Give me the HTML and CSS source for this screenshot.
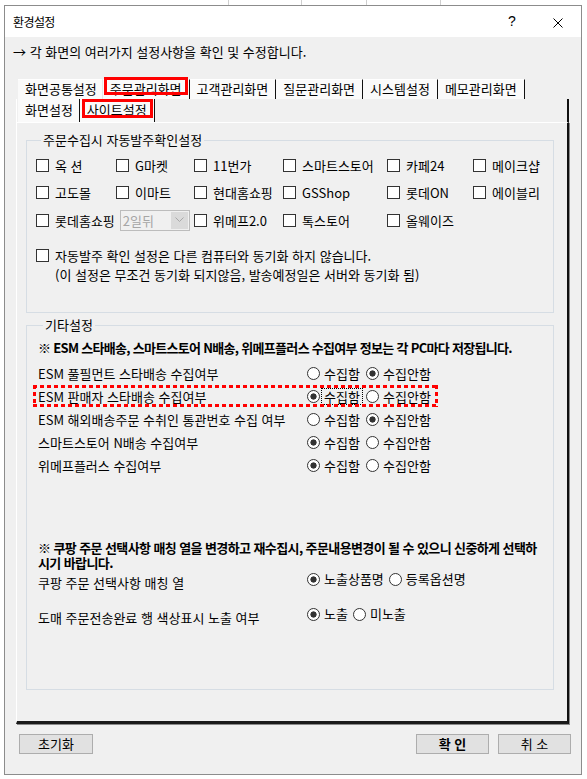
FILE: index.html
```html
<!DOCTYPE html>
<html lang="ko">
<head>
  <meta charset="UTF-8">
  <meta name="viewport" content="width=device-width, initial-scale=1.0">
  <title>환경설정</title>
  <link rel="stylesheet" href="styles.css">
</head>
<body>
  <div class="window">
    <div class="titlebar">
      <span class="title">환경설정</span>
      <span class="tb-btn help">?</span>
      <span class="tb-btn close">
        <svg width="10" height="10" viewBox="0 0 10 10"><path d="M0.5 0.5L9.5 9.5M9.5 0.5L0.5 9.5" stroke="#000" stroke-width="1"/></svg>
      </span>
    </div>

    <p class="desc">→ 각 화면의 여러가지 설정사항을 확인 및 수정합니다.</p>

    <div class="tabs tabs-back">
      <span class="tab first">화면공통설정</span>
      <span class="tab mark">주문관리화면</span>
      <span class="tab">고객관리화면</span>
      <span class="tab">질문관리화면</span>
      <span class="tab">시스템설정</span>
      <span class="tab">메모관리화면</span>
    </div>
    <div class="tabs tabs-front">
      <span class="tab">화면설정</span>
      <span class="tab mark">사이트설정</span>
    </div>

    <div class="panel">
      <fieldset class="group group-site">
        <legend>주문수집시 자동발주확인설정</legend>
        <div class="site-grid">
          <div class="chk"><span class="cb"></span>옥 션</div>
          <div class="chk"><span class="cb"></span>G마켓</div>
          <div class="chk"><span class="cb"></span>11번가</div>
          <div class="chk"><span class="cb"></span>스마트스토어</div>
          <div class="chk"><span class="cb"></span>카페24</div>
          <div class="chk"><span class="cb"></span>메이크샵</div>

          <div class="chk"><span class="cb"></span>고도몰</div>
          <div class="chk"><span class="cb"></span>이마트</div>
          <div class="chk"><span class="cb"></span>현대홈쇼핑</div>
          <div class="chk"><span class="cb"></span>GSShop</div>
          <div class="chk"><span class="cb"></span>롯데ON</div>
          <div class="chk"><span class="cb"></span>에이블리</div>

          <div class="chk span2"><span class="cb"></span>롯데홈쇼핑
            <span class="combo"><span class="combo-text">2일뒤</span><span class="combo-btn"><svg width="9" height="6" viewBox="0 0 9 6"><path d="M0.5 0.5L4.5 4.5L8.5 0.5" fill="none" stroke="#a8a8a8" stroke-width="1"/></svg></span></span>
          </div>
          <div class="chk"><span class="cb"></span>위메프2.0</div>
          <div class="chk"><span class="cb"></span>톡스토어</div>
          <div class="chk"><span class="cb"></span>올웨이즈</div>
        </div>
        <div class="chk sync">
          <span class="cb"></span>
          <div>자동발주 확인 설정은 다른 컴퓨터와 동기화 하지 않습니다.<br>(이 설정은 무조건 동기화 되지않음, 발송예정일은 서버와 동기화 됨)</div>
        </div>
      </fieldset>

      <fieldset class="group group-etc">
        <legend>기타설정</legend>
        <p class="note">※ ESM 스타배송, 스마트스토어 N배송, 위메프플러스 수집여부 정보는 각 PC마다 저장됩니다.</p>

        <div class="opt">
          <span class="opt-label">ESM 풀필먼트 스타배송 수집여부</span>
          <span class="radio fixed"><span class="rb"></span>수집함</span>
          <span class="radio"><span class="rb on"></span>수집안함</span>
        </div>
        <div class="opt marked">
          <span class="opt-label">ESM 판매자 스타배송 수집여부</span>
          <span class="radio fixed"><span class="rb on"></span><span class="focus">수집함</span></span>
          <span class="radio"><span class="rb"></span>수집안함</span>
        </div>
        <div class="opt">
          <span class="opt-label">ESM 해외배송주문 수취인 통관번호 수집 여부</span>
          <span class="radio fixed"><span class="rb"></span>수집함</span>
          <span class="radio"><span class="rb on"></span>수집안함</span>
        </div>
        <div class="opt">
          <span class="opt-label">스마트스토어 N배송 수집여부</span>
          <span class="radio fixed"><span class="rb on"></span>수집함</span>
          <span class="radio"><span class="rb"></span>수집안함</span>
        </div>
        <div class="opt">
          <span class="opt-label">위메프플러스 수집여부</span>
          <span class="radio fixed"><span class="rb on"></span>수집함</span>
          <span class="radio"><span class="rb"></span>수집안함</span>
        </div>

        <p class="note note-coupang">※ 쿠팡 주문 선택사항 매칭 열을 변경하고 재수집시, 주문내용변경이 될 수 있으니 신중하게 선택하<br>시기 바랍니다.</p>

        <div class="opt opt-tall">
          <span class="opt-label">쿠팡 주문 선택사항 매칭 열</span>
          <span class="radio"><span class="rb on"></span>노출상품명</span>
          <span class="radio"><span class="rb"></span>등록옵션명</span>
        </div>
        <div class="opt opt-tall">
          <span class="opt-label">도매 주문전송완료 행 색상표시 노출 여부</span>
          <span class="radio"><span class="rb on"></span>노출</span>
          <span class="radio"><span class="rb"></span>미노출</span>
        </div>
      </fieldset>
    </div>

    <div class="buttons">
      <button class="btn">초기화</button>
      <button class="btn ok">확 인</button>
      <button class="btn cancel">취 소</button>
    </div>
  </div>
</body>
</html>
```

FILE: styles.css
```css
body {
  margin: 0;
  padding: 5px 0 0 4px;
  font-family: "Noto Sans CJK KR", "Noto Sans", sans-serif;
  font-size: 13px;
  color: #000;
  background:
    linear-gradient(#cfcfcf, #cfcfcf) 228px 0 / 1px 5px no-repeat,
    linear-gradient(#cfcfcf, #cfcfcf) 301px 0 / 1px 5px no-repeat,
    linear-gradient(#cfcfcf, #cfcfcf) 366px 0 / 1px 5px no-repeat,
    linear-gradient(#cfcfcf, #cfcfcf) 440px 0 / 1px 5px no-repeat,
    #fff;
}
.window {
  box-sizing: border-box;
  width: 578px;
  height: 770px;
  border: 1px solid #8c8c8c;
  background: #f0f0f0;
}
.titlebar {
  display: flex;
  height: 31px;
  line-height: 31px;
  background: #fff;
}
.title {
  padding-left: 8px;
  font-size: 12px;
  letter-spacing: -0.6px;
}
.tb-btn {
  width: 46px;
  text-align: center;
}
.help {
  margin-left: auto;
  font-family: "Liberation Sans", sans-serif;
  font-size: 14px;
}
.close svg {
  vertical-align: -1px;
}
.desc {
  margin: 7px 0 0 8px;
  line-height: 16px;
}

/* tabs */
.tabs {
  display: flex;
}
.tabs-back {
  margin-top: 19px;
  padding-left: 13px;
  height: 20px;
}
.tabs-front {
  box-sizing: border-box;
  margin-left: 11px;
  width: 553px;
  height: 23px;
  padding-left: 1px;
  border-left: 1px solid #fff;
  border-right: 2px solid #111;
}
.tab {
  position: relative;
  padding: 0 7px;
  line-height: 18px;
  background: #fafafa;
  border-right: 1px solid #111;
}
.tabs-back .tab {
  border-top: 1px solid #fff;
}
.tabs-back .tab.first {
  padding-right: 5px;
  border-right-color: #e6e6e6;
}
.tabs-front .tab {
  line-height: 21px;
}
.tabs-front .tab:first-child {
  padding-right: 6px;
}
.tab.mark::after {
  content: "";
  position: absolute;
  left: 1px;
  right: 1px;
  top: -3px;
  height: 18px;
  box-sizing: border-box;
  border: 3px solid #f00;
}
.tabs-front .tab.mark::after {
  left: 2px;
  top: 0;
  height: 19px;
}

/* panel */
.panel {
  box-sizing: border-box;
  margin-left: 11px;
  width: 553px;
  height: 602px;
  padding-left: 9px;
  border-left: 1px solid #fff;
  border-top: 1px solid #fff;
  border-right: 2px solid #111;
  border-bottom: 3px solid #1a1a1a;
  box-shadow: 1px 1px 0 #8a8a8a;
}
.group {
  box-sizing: border-box;
  width: 528px;
  margin: 0;
  padding: 0;
  border: 1px solid #d6dde4;
  min-inline-size: 0;
}
.group legend {
  margin-left: 5px;
  padding: 0 2px;
  line-height: 16px;
}
.group-site {
  margin-top: 9px;
  height: 181px;
  padding-left: 9px;
}
.group-etc {
  margin-top: 4px;
  height: 373px;
  padding-left: 11px;
}
.site-grid {
  display: grid;
  grid-template-columns: 80px 78px 89px 104px 86px 60px;
  grid-auto-rows: 20px;
  row-gap: 7.5px;
  margin-top: 7px;
}
.chk {
  display: flex;
  align-items: center;
  gap: 6px;
  white-space: nowrap;
}
.span2 {
  grid-column: span 2;
}
.cb {
  flex: none;
  box-sizing: border-box;
  width: 13px;
  height: 13px;
  border: 1px solid #333;
  background: #fff;
}
.combo {
  display: flex;
  box-sizing: border-box;
  width: 70px;
  height: 21px;
  margin-left: -1px;
  border: 1px solid #bcbcbc;
  background: #f0f0f0;
}
.combo-text {
  flex: 1;
  padding-left: 2px;
  line-height: 19px;
  color: #a6a6a6;
}
.combo-btn {
  display: flex;
  align-items: center;
  justify-content: center;
  width: 17px;
  margin: 1px;
  background: #dadada;
}
.sync {
  align-items: flex-start;
  margin-top: 15.5px;
  line-height: 19px;
}
.sync .cb {
  margin-top: 3px;
}

/* other settings */
.note {
  margin: 7px 0 6px;
  line-height: 16px;
  font-weight: bold;
  letter-spacing: -0.7px;
}
.note-coupang {
  margin: 63px 0 0;
  line-height: 15px;
  letter-spacing: -0.6px;
}
.opt {
  position: relative;
  display: flex;
  align-items: center;
  height: 23px;
}
.opt-label {
  width: 269px;
  flex: none;
  white-space: nowrap;
}
.radio {
  display: flex;
  align-items: center;
  gap: 4px;
  margin-right: 5px;
  white-space: nowrap;
}
.radio.fixed {
  width: 59px;
  margin-right: 0;
}
.rb {
  flex: none;
  box-sizing: border-box;
  width: 13px;
  height: 13px;
  border: 1px solid #333;
  border-radius: 50%;
  background: #fff;
}
.rb.on {
  background: radial-gradient(circle, #333 0 2.8px, #fff 3.4px);
}
.focus {
  margin: 0 -2px;
  padding: 0 2px;
  line-height: 15px;
  outline: 1px dotted #000;
}
.opt.marked::after {
  content: "";
  position: absolute;
  left: -5px;
  top: 0;
  width: 405px;
  height: 22px;
  background:
    repeating-linear-gradient(90deg, #f00 0 4px, transparent 4px 7px) top / 100% 3px no-repeat,
    repeating-linear-gradient(90deg, #f00 0 4px, transparent 4px 7px) bottom / 100% 3px no-repeat,
    repeating-linear-gradient(180deg, #f00 0 4px, transparent 4px 7px) left / 3px 100% no-repeat,
    repeating-linear-gradient(180deg, #f00 0 4px, transparent 4px 7px) right / 3px 100% no-repeat;
}
.opt-tall {
  align-items: flex-start;
  height: 35px;
}
.opt-tall .opt-label {
  margin-top: 5px;
  line-height: 16px;
}
.opt-tall .radio {
  margin-top: 1px;
  line-height: 16px;
}

/* buttons */
.buttons {
  display: flex;
  margin-top: 10px;
  padding: 0 10px 0 14px;
}
.btn {
  box-sizing: border-box;
  width: 74px;
  height: 20px;
  padding: 0;
  border: 1px solid #adadad;
  background: #e1e1e1;
  font-family: inherit;
  font-size: 13px;
  line-height: 18px;
  color: #000;
}
.btn.ok {
  width: 73px;
  margin-left: auto;
  font-weight: bold;
}
.btn.cancel {
  width: 73px;
  margin-left: 9px;
}
```
